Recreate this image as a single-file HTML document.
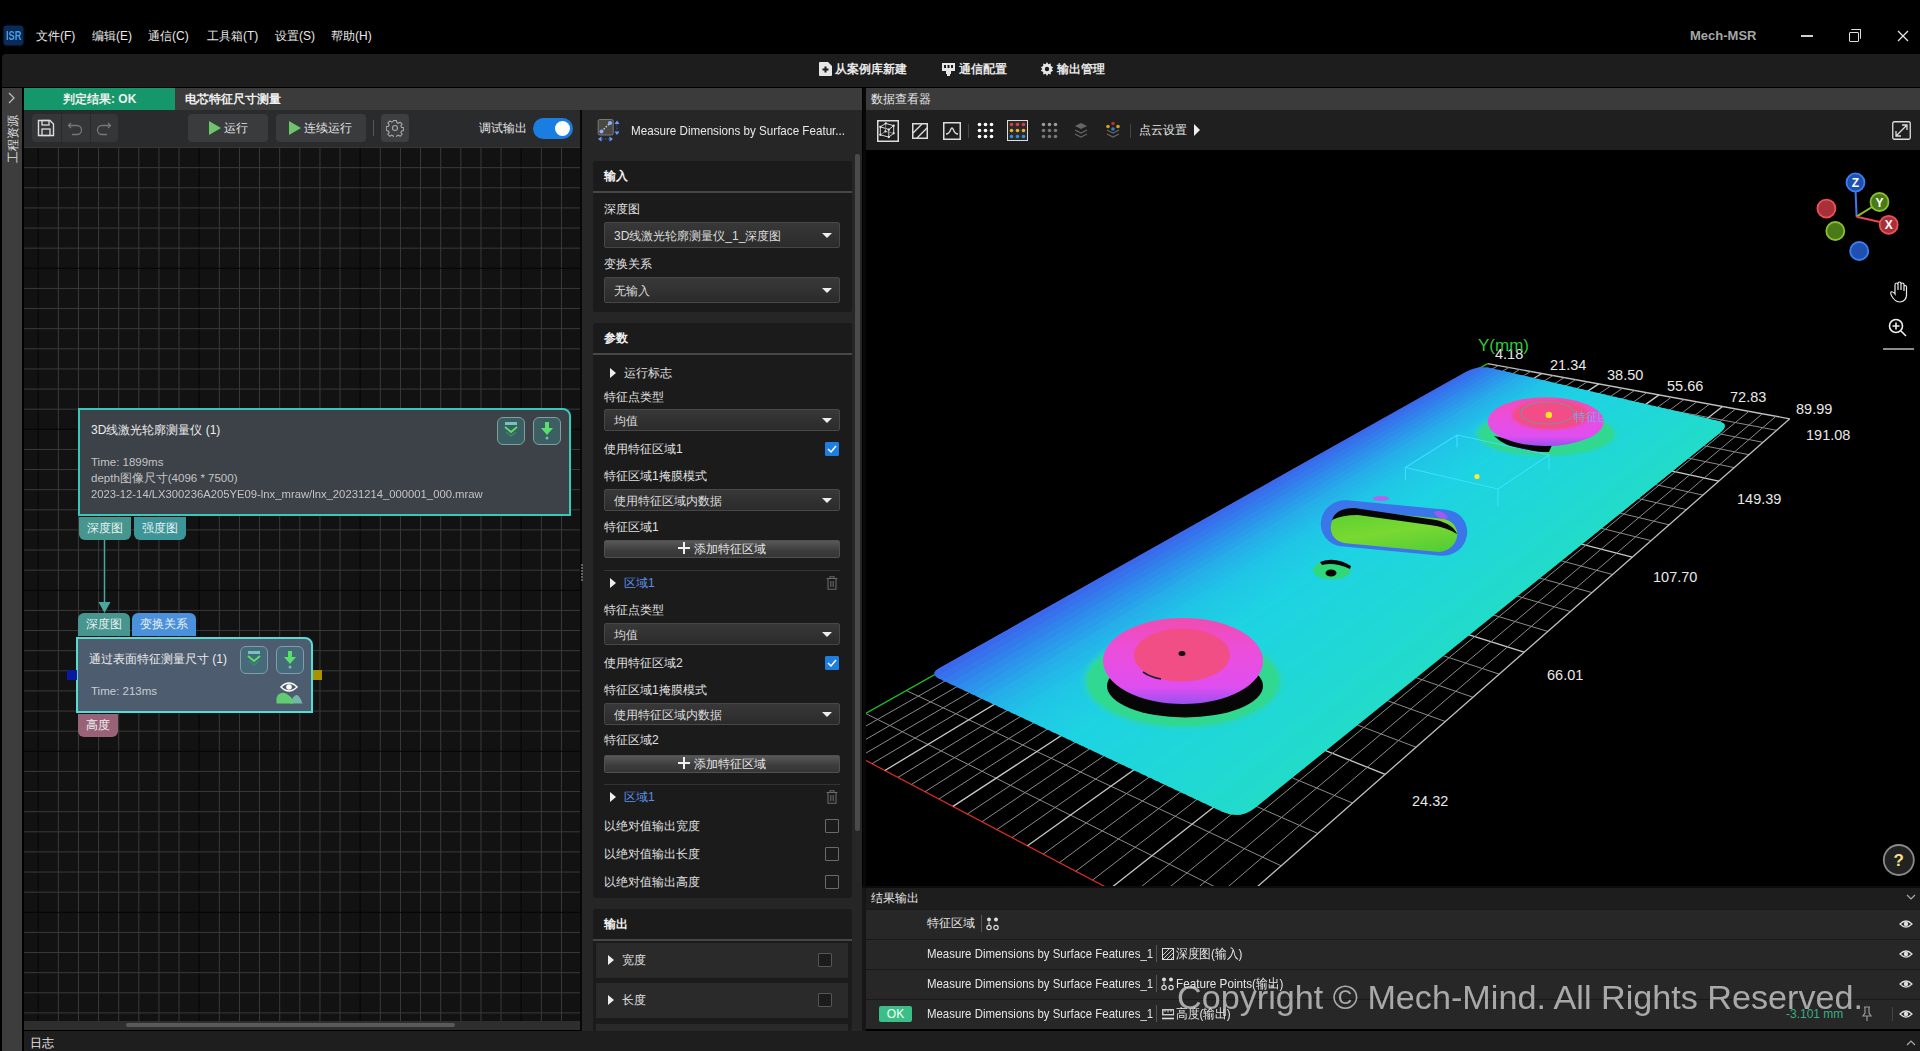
<!DOCTYPE html>
<html><head><meta charset="utf-8">
<style>
*{box-sizing:border-box;margin:0;padding:0}
html,body{width:1920px;height:1051px;overflow:hidden;background:#000;font-family:"Liberation Sans",sans-serif;color:#ddd}
.a{position:absolute}
.t{position:absolute;white-space:nowrap;line-height:1}
.m{font-size:12px;color:#e8e8e8}
.lbl{position:absolute;white-space:nowrap;line-height:1;font-size:12px;color:#e0e0e0;left:604px}
.dd{position:absolute;left:604px;width:236px;height:22px;background:linear-gradient(#383838,#2b2b2b);border:1px solid #474747;border-radius:2px;font-size:12px;color:#dcdcdc;padding:4px 0 0 9px;line-height:1}
.dd:after{content:"";position:absolute;right:7px;top:calc(50% - 2px);border-left:5px solid transparent;border-right:5px solid transparent;border-top:5px solid #eee}
.btn{position:absolute;left:604px;width:236px;height:18px;background:linear-gradient(#585858,#3c3c3c 60%,#363636);border:1px solid #505050;border-radius:2px;font-size:12px;color:#e6e6e6;text-align:center;line-height:16px}
.cb{position:absolute;left:825px;width:14px;height:14px;border:1px solid #6a6a6a;border-radius:1px;background:#1a1a1a}
.cbon{background:#1e7ee0;border-color:#1e7ee0}
.tri{position:absolute;width:0;height:0;border-top:5px solid transparent;border-bottom:5px solid transparent;border-left:6px solid #eee}
.port{position:absolute;height:23px;border-radius:0 0 6px 6px;font-size:12px;color:#e8f0f0;text-align:center;line-height:23px}
.portu{border-radius:6px 6px 0 0}
.rowr{position:absolute;left:866px;width:1054px;height:29px;background:#262626;font-size:13px;color:#e6e6e6}
</style></head><body>

<div class="a" style="left:0;top:0;width:1920px;height:54px;background:#000"></div>
<div class="a" style="left:4px;top:26px;width:19px;height:19px;background:#0a2a5a;border-radius:3px;box-shadow:0 0 2px #1a5aa0"></div>
<div class="t" style="left:6px;top:29px;font-size:13px;font-weight:bold;color:#4a9ee0;transform:scaleX(0.72);transform-origin:0 0">ISR</div>
<div class="t m" style="left:36px;top:30px">文件(F)</div>
<div class="t m" style="left:92px;top:30px">编辑(E)</div>
<div class="t m" style="left:148px;top:30px">通信(C)</div>
<div class="t m" style="left:207px;top:30px">工具箱(T)</div>
<div class="t m" style="left:275px;top:30px">设置(S)</div>
<div class="t m" style="left:331px;top:30px">帮助(H)</div>
<div class="t" style="left:1690px;top:29px;font-size:13px;font-weight:bold;color:#a6a6a6">Mech-MSR</div>
<div class="a" style="left:1801px;top:35px;width:12px;height:2px;background:#d0d0d0"></div>
<div class="a" style="left:1849px;top:32px;width:10px;height:10px;border:1px solid #ddd;border-radius:1px"></div>
<div class="a" style="left:1851px;top:29px;width:10px;height:10px;border-top:1px solid #ddd;border-right:1px solid #ddd;border-radius:1px"></div>
<svg class="a" style="left:1897px;top:30px" width="12" height="12"><path d="M1 1L11 11M11 1L1 11" stroke="#e6e6e6" stroke-width="1.3"/></svg>
<div class="a" style="left:2px;top:54px;width:1918px;height:33px;background:#1d1d1d;border-radius:4px 0 0 0"></div>
<svg class="a" style="left:818px;top:61px" width="15" height="16"><path d="M1 2Q1 1 2 1H10L14 5V14Q14 15 13 15H2Q1 15 1 14Z" fill="#e6e6e6"/><path d="M7.5 5.5V11.5M4.5 8.5H10.5" stroke="#1d1d1d" stroke-width="2"/></svg>
<div class="t m" style="left:835px;top:63px;font-weight:bold">从案例库新建</div>
<svg class="a" style="left:941px;top:62px" width="15" height="16"><path d="M1 1H14V9H10V12H9V14H6V12H5V9H1Z" fill="#e6e6e6"/><rect x="3" y="3" width="2" height="3" fill="#1d1d1d"/><rect x="6.5" y="3" width="2" height="3" fill="#1d1d1d"/><rect x="10" y="3" width="2" height="3" fill="#1d1d1d"/></svg>
<div class="t m" style="left:959px;top:63px;font-weight:bold">通信配置</div>
<svg class="a" style="left:1040px;top:62px" width="14" height="14" viewBox="0 0 14 14"><path d="M7 0L8.3 2.2L10.8 1.5L10.8 4.1L13.2 5.2L11.6 7L13.2 8.8L10.8 9.9L10.8 12.5L8.3 11.8L7 14L5.7 11.8L3.2 12.5L3.2 9.9L0.8 8.8L2.4 7L0.8 5.2L3.2 4.1L3.2 1.5L5.7 2.2Z" fill="#e6e6e6"/><circle cx="7" cy="7" r="2.2" fill="#1d1d1d"/></svg>
<div class="t m" style="left:1057px;top:63px;font-weight:bold">输出管理</div>
<div class="a" style="left:2px;top:88px;width:20px;height:963px;background:#3d3d3d"></div>
<svg class="a" style="left:7px;top:92px" width="10" height="12"><path d="M2 1L7 6L2 11" stroke="#bbb" stroke-width="1.3" fill="none"/></svg>
<div class="t" style="left:-13.5px;top:132.5px;width:52px;font-size:12px;color:#e0e0e0;transform:rotate(-90deg);transform-origin:26px 6px;text-align:center">工程资源</div>
<div class="a" style="left:24px;top:88px;width:838px;height:22px;background:#3b3b3b"></div>
<div class="a" style="left:24px;top:88px;width:151px;height:22px;background:#15976b"></div>
<div class="t" style="left:63px;top:93px;font-size:12px;font-weight:bold;color:#f0f0f0">判定结果: OK</div>
<div class="t" style="left:185px;top:93px;font-size:12px;font-weight:bold;color:#f0f0f0">电芯特征尺寸测量</div>
<div class="a" style="left:866px;top:88px;width:1054px;height:22px;background:#3b3b3b"></div>
<div class="t" style="left:871px;top:93px;font-size:12px;color:#e6e6e6">数据查看器</div>
<div class="a" style="left:24px;top:110px;width:556px;height:37px;background:#2a2b2d"></div>
<div class="a" style="left:32px;top:114px;width:86px;height:28px;background:#353638;border-radius:4px"></div>
<div class="a" style="left:61px;top:114px;width:1px;height:28px;background:#2a2b2d"></div>
<div class="a" style="left:90px;top:114px;width:1px;height:28px;background:#2a2b2d"></div>
<svg class="a" style="left:37px;top:119px" width="18" height="18"><path d="M1.5 1.5H13L16.5 5V16.5H1.5Z" stroke="#ddd" stroke-width="1.4" fill="none"/><rect x="5" y="1.5" width="7" height="4.5" stroke="#ddd" stroke-width="1.3" fill="none"/><rect x="5" y="10" width="8" height="6.5" stroke="#ddd" stroke-width="1.3" fill="none"/></svg>
<svg class="a" style="left:67px;top:120px" width="16" height="16"><path d="M4 3L1.5 5.5L4 8M1.5 5.5H10A4.5 4.5 0 0 1 10 14.5H5" stroke="#777" stroke-width="1.3" fill="none"/></svg>
<svg class="a" style="left:96px;top:120px" width="16" height="16"><path d="M12 3L14.5 5.5L12 8M14.5 5.5H6A4.5 4.5 0 0 0 6 14.5H11" stroke="#777" stroke-width="1.3" fill="none"/></svg>
<div class="a" style="left:188px;top:114px;width:80px;height:28px;background:#3a3b3d;border-radius:4px"></div>
<svg class="a" style="left:209px;top:121px" width="12" height="14"><path d="M0 0L12 7L0 14Z" fill="#6cc46c"/></svg>
<div class="t m" style="left:224px;top:122px;color:#e6e6e6">运行</div>
<div class="a" style="left:276px;top:114px;width:90px;height:28px;background:#3a3b3d;border-radius:4px"></div>
<svg class="a" style="left:289px;top:121px" width="12" height="14"><path d="M0 0L12 7L0 14Z" fill="#6cc46c"/></svg>
<div class="t m" style="left:304px;top:122px;color:#e6e6e6">连续运行</div>
<div class="a" style="left:373px;top:120px;width:1px;height:16px;background:#555"></div>
<div class="a" style="left:381px;top:114px;width:28px;height:28px;background:#3e3f41;border-radius:4px"></div>
<svg class="a" style="left:386px;top:119px" width="18" height="18" viewBox="0 0 18 18"><path d="M7.6 1.5h2.8l.4 2.1 1.5.7 1.8-1.2 2 2-1.2 1.8.7 1.5 2.1.4v2.8l-2.1.4-.7 1.5 1.2 1.8-2 2-1.8-1.2-1.5.7-.4 2.1H7.6l-.4-2.1-1.5-.7-1.8 1.2-2-2 1.2-1.8-.7-1.5-2.1-.4V7.6l2.1-.4.7-1.5-1.2-1.8 2-2 1.8 1.2 1.5-.7z" stroke="#aaa" stroke-width="1.1" fill="none"/><circle cx="9" cy="9" r="2.5" stroke="#aaa" stroke-width="1.1" fill="none"/></svg>
<div class="t m" style="left:479px;top:122px;color:#e6e6e6">调试输出</div>
<div class="a" style="left:533px;top:118px;width:40px;height:21px;background:#1a7de2;border-radius:11px"></div>
<div class="a" style="left:555px;top:121px;width:15px;height:15px;background:#fff;border-radius:50%"></div>
<div class="a" style="left:22px;top:147px;width:2px;height:885px;background:#000"></div>
<svg class="a" style="left:24px;top:147px" width="556" height="874"><rect width="556" height="874" fill="#121212"/><line x1="14.20" y1="0" x2="14.20" y2="874" stroke="#060606" stroke-width="1"/><line x1="34.33" y1="0" x2="34.33" y2="874" stroke="#3a3a3a" stroke-width="1"/><line x1="54.45" y1="0" x2="54.45" y2="874" stroke="#3a3a3a" stroke-width="1"/><line x1="74.58" y1="0" x2="74.58" y2="874" stroke="#3a3a3a" stroke-width="1"/><line x1="94.70" y1="0" x2="94.70" y2="874" stroke="#3a3a3a" stroke-width="1"/><line x1="114.82" y1="0" x2="114.82" y2="874" stroke="#3a3a3a" stroke-width="1"/><line x1="134.95" y1="0" x2="134.95" y2="874" stroke="#3a3a3a" stroke-width="1"/><line x1="155.07" y1="0" x2="155.07" y2="874" stroke="#3a3a3a" stroke-width="1"/><line x1="175.20" y1="0" x2="175.20" y2="874" stroke="#060606" stroke-width="1"/><line x1="195.32" y1="0" x2="195.32" y2="874" stroke="#3a3a3a" stroke-width="1"/><line x1="215.45" y1="0" x2="215.45" y2="874" stroke="#3a3a3a" stroke-width="1"/><line x1="235.57" y1="0" x2="235.57" y2="874" stroke="#3a3a3a" stroke-width="1"/><line x1="255.70" y1="0" x2="255.70" y2="874" stroke="#3a3a3a" stroke-width="1"/><line x1="275.82" y1="0" x2="275.82" y2="874" stroke="#3a3a3a" stroke-width="1"/><line x1="295.95" y1="0" x2="295.95" y2="874" stroke="#3a3a3a" stroke-width="1"/><line x1="316.07" y1="0" x2="316.07" y2="874" stroke="#3a3a3a" stroke-width="1"/><line x1="336.20" y1="0" x2="336.20" y2="874" stroke="#060606" stroke-width="1"/><line x1="356.32" y1="0" x2="356.32" y2="874" stroke="#3a3a3a" stroke-width="1"/><line x1="376.45" y1="0" x2="376.45" y2="874" stroke="#3a3a3a" stroke-width="1"/><line x1="396.57" y1="0" x2="396.57" y2="874" stroke="#3a3a3a" stroke-width="1"/><line x1="416.70" y1="0" x2="416.70" y2="874" stroke="#3a3a3a" stroke-width="1"/><line x1="436.82" y1="0" x2="436.82" y2="874" stroke="#3a3a3a" stroke-width="1"/><line x1="456.95" y1="0" x2="456.95" y2="874" stroke="#3a3a3a" stroke-width="1"/><line x1="477.07" y1="0" x2="477.07" y2="874" stroke="#3a3a3a" stroke-width="1"/><line x1="497.20" y1="0" x2="497.20" y2="874" stroke="#060606" stroke-width="1"/><line x1="517.33" y1="0" x2="517.33" y2="874" stroke="#3a3a3a" stroke-width="1"/><line x1="537.45" y1="0" x2="537.45" y2="874" stroke="#3a3a3a" stroke-width="1"/><line x1="0" y1="0.55" x2="556" y2="0.55" stroke="#3a3a3a" stroke-width="1"/><line x1="0" y1="20.68" x2="556" y2="20.68" stroke="#3a3a3a" stroke-width="1"/><line x1="0" y1="40.80" x2="556" y2="40.80" stroke="#3a3a3a" stroke-width="1"/><line x1="0" y1="60.93" x2="556" y2="60.93" stroke="#3a3a3a" stroke-width="1"/><line x1="0" y1="81.05" x2="556" y2="81.05" stroke="#3a3a3a" stroke-width="1"/><line x1="0" y1="101.18" x2="556" y2="101.18" stroke="#3a3a3a" stroke-width="1"/><line x1="0" y1="121.30" x2="556" y2="121.30" stroke="#060606" stroke-width="1"/><line x1="0" y1="141.43" x2="556" y2="141.43" stroke="#3a3a3a" stroke-width="1"/><line x1="0" y1="161.55" x2="556" y2="161.55" stroke="#3a3a3a" stroke-width="1"/><line x1="0" y1="181.68" x2="556" y2="181.68" stroke="#3a3a3a" stroke-width="1"/><line x1="0" y1="201.80" x2="556" y2="201.80" stroke="#3a3a3a" stroke-width="1"/><line x1="0" y1="221.93" x2="556" y2="221.93" stroke="#3a3a3a" stroke-width="1"/><line x1="0" y1="242.05" x2="556" y2="242.05" stroke="#3a3a3a" stroke-width="1"/><line x1="0" y1="262.18" x2="556" y2="262.18" stroke="#3a3a3a" stroke-width="1"/><line x1="0" y1="282.30" x2="556" y2="282.30" stroke="#060606" stroke-width="1"/><line x1="0" y1="302.43" x2="556" y2="302.43" stroke="#3a3a3a" stroke-width="1"/><line x1="0" y1="322.55" x2="556" y2="322.55" stroke="#3a3a3a" stroke-width="1"/><line x1="0" y1="342.68" x2="556" y2="342.68" stroke="#3a3a3a" stroke-width="1"/><line x1="0" y1="362.80" x2="556" y2="362.80" stroke="#3a3a3a" stroke-width="1"/><line x1="0" y1="382.92" x2="556" y2="382.92" stroke="#3a3a3a" stroke-width="1"/><line x1="0" y1="403.05" x2="556" y2="403.05" stroke="#3a3a3a" stroke-width="1"/><line x1="0" y1="423.17" x2="556" y2="423.17" stroke="#3a3a3a" stroke-width="1"/><line x1="0" y1="443.30" x2="556" y2="443.30" stroke="#060606" stroke-width="1"/><line x1="0" y1="463.42" x2="556" y2="463.42" stroke="#3a3a3a" stroke-width="1"/><line x1="0" y1="483.55" x2="556" y2="483.55" stroke="#3a3a3a" stroke-width="1"/><line x1="0" y1="503.67" x2="556" y2="503.67" stroke="#3a3a3a" stroke-width="1"/><line x1="0" y1="523.80" x2="556" y2="523.80" stroke="#3a3a3a" stroke-width="1"/><line x1="0" y1="543.92" x2="556" y2="543.92" stroke="#3a3a3a" stroke-width="1"/><line x1="0" y1="564.05" x2="556" y2="564.05" stroke="#3a3a3a" stroke-width="1"/><line x1="0" y1="584.17" x2="556" y2="584.17" stroke="#3a3a3a" stroke-width="1"/><line x1="0" y1="604.30" x2="556" y2="604.30" stroke="#060606" stroke-width="1"/><line x1="0" y1="624.42" x2="556" y2="624.42" stroke="#3a3a3a" stroke-width="1"/><line x1="0" y1="644.55" x2="556" y2="644.55" stroke="#3a3a3a" stroke-width="1"/><line x1="0" y1="664.67" x2="556" y2="664.67" stroke="#3a3a3a" stroke-width="1"/><line x1="0" y1="684.80" x2="556" y2="684.80" stroke="#3a3a3a" stroke-width="1"/><line x1="0" y1="704.92" x2="556" y2="704.92" stroke="#3a3a3a" stroke-width="1"/><line x1="0" y1="725.05" x2="556" y2="725.05" stroke="#3a3a3a" stroke-width="1"/><line x1="0" y1="745.17" x2="556" y2="745.17" stroke="#3a3a3a" stroke-width="1"/><line x1="0" y1="765.30" x2="556" y2="765.30" stroke="#060606" stroke-width="1"/><line x1="0" y1="785.42" x2="556" y2="785.42" stroke="#3a3a3a" stroke-width="1"/><line x1="0" y1="805.55" x2="556" y2="805.55" stroke="#3a3a3a" stroke-width="1"/><line x1="0" y1="825.67" x2="556" y2="825.67" stroke="#3a3a3a" stroke-width="1"/><line x1="0" y1="845.80" x2="556" y2="845.80" stroke="#3a3a3a" stroke-width="1"/><line x1="0" y1="865.92" x2="556" y2="865.92" stroke="#3a3a3a" stroke-width="1"/></svg>
<div class="a" style="left:24px;top:1021px;width:556px;height:9px;background:#2e2e2e"></div>
<div class="a" style="left:126px;top:1023px;width:329px;height:4px;background:#5a5a5a;border-radius:2px"></div>
<div class="a" style="left:78px;top:408px;width:493px;height:108px;background:#3d4148;border:2px solid #38c9bd;border-radius:0 8px 0 0"></div>
<div class="t" style="left:91px;top:424px;font-size:12px;color:#ececec">3D线激光轮廓测量仪 (1)</div>
<div class="t" style="left:91px;top:457px;font-size:11.5px;color:#c4c4c4">Time: 1899ms</div>
<div class="t" style="left:91px;top:473px;font-size:11.5px;color:#c4c4c4">depth图像尺寸(4096 * 7500)</div>
<div class="t" style="left:91px;top:489px;font-size:11.5px;color:#c4c4c4;transform:scaleX(0.98);transform-origin:0 0">2023-12-14/LX300236A205YE09-lnx_mraw/lnx_20231214_000001_000.mraw</div>
<div class="a" style="left:497px;top:417px;width:28px;height:28px;background:#3b5f63;border:1.5px solid #7fa0a0;border-radius:6px"></div><svg class="a" style="left:503px;top:422px" width="16" height="18"><rect x="2" y="0" width="12" height="3" fill="#72c4bc"/><path d="M2 5L8 10L14 5" stroke="#5ae06a" stroke-width="1.8" fill="none"/><path d="M3 10L8 14L13 10" stroke="#3a8a6a" stroke-width="1.4" fill="none"/></svg><div class="a" style="left:533px;top:417px;width:28px;height:28px;background:#3b5f63;border:1.5px solid #7fa0a0;border-radius:6px"></div><svg class="a" style="left:540px;top:421px" width="14" height="20"><rect x="5" y="1" width="4" height="7" fill="#5ae06a"/><path d="M1 7H13L7 14Z" fill="#5ae06a"/><circle cx="7" cy="17" r="1.5" fill="#80b8b0"/></svg>
<div class="port" style="left:79px;top:517px;width:52px;background:#46968f">深度图</div>
<div class="port" style="left:134px;top:517px;width:52px;background:#3c9598">强度图</div>
<svg class="a" style="left:95px;top:540px" width="20" height="75"><line x1="9.5" y1="0" x2="9.5" y2="64" stroke="#4aa69e" stroke-width="1.5"/><path d="M3.5 62L15.5 62L9.5 73Z" fill="#4aa69e"/></svg>
<div class="port portu" style="left:78px;top:613px;width:52px;background:#46968f">深度图</div>
<div class="port portu" style="left:132px;top:613px;width:64px;background:#4a90dc">变换关系</div>
<div class="a" style="left:76px;top:637px;width:237px;height:76px;background:#4d5c6e;border:2px solid #55ddd4;border-radius:0 8px 0 0"></div>
<div class="t" style="left:89px;top:653px;font-size:12px;color:#ececec">通过表面特征测量尺寸 (1)</div>
<div class="t" style="left:91px;top:686px;font-size:11.5px;color:#c8cdd4">Time: 213ms</div>
<div class="a" style="left:240px;top:646px;width:28px;height:28px;background:#466a7a;border:1.5px solid #7d9cac;border-radius:6px"></div><svg class="a" style="left:246px;top:651px" width="16" height="18"><rect x="2" y="0" width="12" height="3" fill="#72c4bc"/><path d="M2 5L8 10L14 5" stroke="#5ae06a" stroke-width="1.8" fill="none"/><path d="M3 10L8 14L13 10" stroke="#3a8a6a" stroke-width="1.4" fill="none"/></svg><div class="a" style="left:276px;top:646px;width:28px;height:28px;background:#466a7a;border:1.5px solid #7d9cac;border-radius:6px"></div><svg class="a" style="left:283px;top:650px" width="14" height="20"><rect x="5" y="1" width="4" height="7" fill="#5ae06a"/><path d="M1 7H13L7 14Z" fill="#5ae06a"/><circle cx="7" cy="17" r="1.5" fill="#80b8b0"/></svg>
<svg class="a" style="left:275px;top:680px" width="28" height="26"><path d="M6 7Q14 -1 22 7Q14 15 6 7Z" stroke="#fff" stroke-width="1.5" fill="none"/><circle cx="14" cy="7" r="2.8" fill="#fff"/><path d="M15 23.6Q18 15 22 15Q25 16 27.5 23.6Z" fill="#72b8a6"/><path d="M1.5 23.6V18Q3 13 8 12.8Q13 13 18 20V23.6Z" fill="#62cc74"/></svg>
<div class="a" style="left:67px;top:670px;width:10px;height:10px;background:#0a1aa0"></div>
<div class="a" style="left:313px;top:670px;width:9px;height:10px;background:#a89200"></div>
<div class="port" style="left:78px;top:714px;width:40px;background:#9a6276">高度</div>
<div class="a" style="left:580px;top:110px;width:2px;height:921px;background:#080808"></div>
<div class="a" style="left:582px;top:110px;width:280px;height:921px;background:#262626"></div>
<div class="a" style="left:581px;top:564px;width:2px;height:2px;background:#7a7a7a;border-radius:1px"></div><div class="a" style="left:581px;top:567px;width:2px;height:2px;background:#7a7a7a;border-radius:1px"></div><div class="a" style="left:581px;top:570px;width:2px;height:2px;background:#7a7a7a;border-radius:1px"></div><div class="a" style="left:581px;top:573px;width:2px;height:2px;background:#7a7a7a;border-radius:1px"></div><div class="a" style="left:581px;top:576px;width:2px;height:2px;background:#7a7a7a;border-radius:1px"></div><div class="a" style="left:581px;top:579px;width:2px;height:2px;background:#7a7a7a;border-radius:1px"></div>
<div class="a" style="left:863px;top:88px;width:3px;height:800px;background:#080808"></div>
<svg class="a" style="left:597px;top:119px" width="24" height="24"><rect x="1.2" y="0.5" width="15" height="15.5" rx="1.5" fill="#4a4844" stroke="#7c7a74" stroke-width="1"/><line x1="4.5" y1="12.5" x2="13" y2="4" stroke="#ccc" stroke-width="1.4" stroke-dasharray="1.6 1.4"/><circle cx="4.5" cy="12.5" r="2" fill="#8ab0ff"/><circle cx="13" cy="4" r="2" fill="#8ab0ff"/><path d="M20 1.5L22.5 5H17.5Z M20 16L22.5 12.5H17.5Z" fill="#6a9cff"/><line x1="20" y1="5.5" x2="20" y2="12.5" stroke="#2a4a90" stroke-width="1.5" stroke-dasharray="1.5 1.5"/><path d="M1 20L4.5 17.5V22.5Z M16 20L12.5 17.5V22.5Z" fill="#6a9cff"/><line x1="5" y1="20" x2="12" y2="20" stroke="#2a4a90" stroke-width="1.5" stroke-dasharray="1.5 1.5"/></svg>
<div class="t" style="left:631px;top:124px;font-size:13px;color:#e8e8e8;transform:scaleX(0.895);transform-origin:0 0">Measure Dimensions by Surface Featur...</div>
<div class="a" style="left:855px;top:154px;width:5px;height:677px;background:#4a4a4a;border-radius:2px"></div>
<div class="a" style="left:593px;top:161px;width:259px;height:151px;background:#1b1b1b;border-radius:3px"></div><div class="a" style="left:593px;top:191px;width:259px;height:2px;background:#474747"></div><div class="t" style="left:604px;top:170px;font-size:12px;font-weight:bold;color:#f0f0f0">输入</div>
<div class="a" style="left:593px;top:323px;width:259px;height:575px;background:#1b1b1b;border-radius:3px"></div><div class="a" style="left:593px;top:353px;width:259px;height:2px;background:#474747"></div><div class="t" style="left:604px;top:332px;font-size:12px;font-weight:bold;color:#f0f0f0">参数</div>
<div class="a" style="left:593px;top:909px;width:259px;height:122px;background:#1b1b1b;border-radius:3px"></div><div class="a" style="left:593px;top:939px;width:259px;height:2px;background:#474747"></div><div class="t" style="left:604px;top:918px;font-size:12px;font-weight:bold;color:#f0f0f0">输出</div>
<div class="lbl" style="left:604px;top:203px;color:#e0e0e0">深度图</div>
<div class="dd" style="top:222px;height:26px;padding-top:7px">3D线激光轮廓测量仪_1_深度图</div>
<div class="lbl" style="left:604px;top:258px;color:#e0e0e0">变换关系</div>
<div class="dd" style="top:277px;height:26px;padding-top:7px">无输入</div>
<div class="tri" style="left:610px;top:368px"></div>
<div class="lbl" style="left:624px;top:367px;color:#e0e0e0">运行标志</div>
<div class="lbl" style="left:604px;top:391px;color:#e0e0e0">特征点类型</div>
<div class="dd" style="top:409px;height:22px;padding-top:5px">均值</div>
<div class="lbl" style="left:604px;top:443px;color:#e0e0e0">使用特征区域1</div>
<div class="cb cbon" style="top:442px"></div><svg class="a" style="left:827px;top:444px" width="10" height="10"><path d="M1 5L4 8L9 2" stroke="#fff" stroke-width="1.5" fill="none"/></svg>
<div class="lbl" style="left:604px;top:470px;color:#e0e0e0">特征区域1掩膜模式</div>
<div class="dd" style="top:489px;height:22px;padding-top:5px">使用特征区域内数据</div>
<div class="lbl" style="left:604px;top:521px;color:#e0e0e0">特征区域1</div>
<div class="btn" style="top:540px"><svg style="position:relative;top:1px;margin-right:4px" width="12" height="12"><path d="M6 0V12M0 6H12" stroke="#f0f0f0" stroke-width="2"/></svg>添加特征区域</div>
<div class="a" style="left:604px;top:570px;width:236px;height:1px;background:#333"></div>
<div class="tri" style="left:610px;top:578px"></div>
<div class="lbl" style="left:624px;top:577px;color:#5b8fe6">区域1</div>
<svg class="a" style="left:826px;top:576px" width="12" height="14"><path d="M0.5 2.5H11.5M4 2.5V0.8H8V2.5M2 3V13.2H10V3M4.8 5V11M7.2 5V11" stroke="#6a6a6a" stroke-width="1.1" fill="none"/></svg>
<div class="lbl" style="left:604px;top:604px;color:#e0e0e0">特征点类型</div>
<div class="dd" style="top:623px;height:22px;padding-top:5px">均值</div>
<div class="lbl" style="left:604px;top:657px;color:#e0e0e0">使用特征区域2</div>
<div class="cb cbon" style="top:656px"></div><svg class="a" style="left:827px;top:658px" width="10" height="10"><path d="M1 5L4 8L9 2" stroke="#fff" stroke-width="1.5" fill="none"/></svg>
<div class="lbl" style="left:604px;top:684px;color:#e0e0e0">特征区域1掩膜模式</div>
<div class="dd" style="top:703px;height:22px;padding-top:5px">使用特征区域内数据</div>
<div class="lbl" style="left:604px;top:734px;color:#e0e0e0">特征区域2</div>
<div class="btn" style="top:755px"><svg style="position:relative;top:1px;margin-right:4px" width="12" height="12"><path d="M6 0V12M0 6H12" stroke="#f0f0f0" stroke-width="2"/></svg>添加特征区域</div>
<div class="a" style="left:604px;top:784px;width:236px;height:1px;background:#333"></div>
<div class="tri" style="left:610px;top:792px"></div>
<div class="lbl" style="left:624px;top:791px;color:#5b8fe6">区域1</div>
<svg class="a" style="left:826px;top:790px" width="12" height="14"><path d="M0.5 2.5H11.5M4 2.5V0.8H8V2.5M2 3V13.2H10V3M4.8 5V11M7.2 5V11" stroke="#6a6a6a" stroke-width="1.1" fill="none"/></svg>
<div class="lbl" style="left:604px;top:820px;color:#e0e0e0">以绝对值输出宽度</div>
<div class="cb" style="top:819px;background:transparent"></div>
<div class="lbl" style="left:604px;top:848px;color:#e0e0e0">以绝对值输出长度</div>
<div class="cb" style="top:847px;background:transparent"></div>
<div class="lbl" style="left:604px;top:876px;color:#e0e0e0">以绝对值输出高度</div>
<div class="cb" style="top:875px;background:transparent"></div>
<div class="a" style="left:596px;top:943px;width:252px;height:35px;background:#2a2a2a"></div>
<div class="tri" style="left:608px;top:955px"></div>
<div class="lbl" style="left:622px;top:954px;color:#e0e0e0">宽度</div>
<div class="cb" style="left:818px;top:953px;background:#1c1c1c;border-color:#555"></div>
<div class="a" style="left:596px;top:983px;width:252px;height:35px;background:#2a2a2a"></div>
<div class="tri" style="left:608px;top:995px"></div>
<div class="lbl" style="left:622px;top:994px;color:#e0e0e0">长度</div>
<div class="cb" style="left:818px;top:993px;background:#1c1c1c;border-color:#555"></div>
<div class="a" style="left:596px;top:1024px;width:252px;height:35px;background:#2a2a2a"></div>
<div class="a" style="left:866px;top:110px;width:1054px;height:40px;background:#1f1f1f"></div>
<svg class="a" style="left:877px;top:120px" width="22" height="22"><rect x="0.75" y="0.75" width="20.5" height="20.5" stroke="#ddd" stroke-width="1.5" fill="none"/><path d="M8.75 3.4L16.7 5.7V13.3L11.8 17.1L3.3 14.8V6.8Z M11.8 9.5L3.3 6.8 M11.8 9.5L16.7 5.7 M11.8 9.5V17.1" stroke="#d8d8d8" stroke-width="1" fill="none"/><path d="M8.4 11.4L8.75 3.4M8.4 11.4L3.3 14.8M8.4 11.4L16.7 13.3" stroke="#999" stroke-width="0.8" fill="none"/><g fill="#eee"><circle cx="8.75" cy="3.4" r="1.1"/><circle cx="16.7" cy="5.7" r="1.1"/><circle cx="16.7" cy="13.3" r="1.1"/><circle cx="11.8" cy="17.1" r="1.1"/><circle cx="3.3" cy="14.8" r="1.1"/><circle cx="3.3" cy="6.8" r="1.1"/><circle cx="11.8" cy="9.5" r="1.1"/><circle cx="8.4" cy="11.4" r="1.1"/></g></svg><svg class="a" style="left:912px;top:123px" width="16" height="16"><rect x="0.75" y="0.75" width="14.5" height="14.5" stroke="#ddd" stroke-width="1.5" fill="none"/><path d="M1 10L10 1M5 15L15 5" stroke="#ddd" stroke-width="1.4"/></svg><svg class="a" style="left:943px;top:122px" width="18" height="18"><rect x="0.75" y="0.75" width="16.5" height="16.5" stroke="#ddd" stroke-width="1.5" fill="none"/><path d="M3 12Q6 12 7.5 8Q9 4 10.5 8Q12 12 15 12" stroke="#ddd" stroke-width="1.3" fill="none"/></svg><div class="a" style="left:968px;top:124px;width:1px;height:14px;background:#444"></div><svg class="a" style="left:977px;top:122px" width="18" height="18"><circle cx="2.5" cy="2.5" r="1.8" fill="#fff"/><circle cx="8.5" cy="2.5" r="1.8" fill="#fff"/><circle cx="14.5" cy="2.5" r="1.8" fill="#fff"/><circle cx="2.5" cy="8.5" r="1.8" fill="#fff"/><circle cx="8.5" cy="8.5" r="1.8" fill="#fff"/><circle cx="14.5" cy="8.5" r="1.8" fill="#fff"/><circle cx="2.5" cy="14.5" r="1.8" fill="#fff"/><circle cx="8.5" cy="14.5" r="1.8" fill="#fff"/><circle cx="14.5" cy="14.5" r="1.8" fill="#fff"/></svg><div class="a" style="left:1007px;top:120px;width:21px;height:21px;border:1.5px solid #ddd;background:#2a2a2a"></div><svg class="a" style="left:1009px;top:122px" width="18" height="18"><circle cx="2.5" cy="2.5" r="1.8" fill="#d84040"/><circle cx="8.5" cy="2.5" r="1.8" fill="#d84040"/><circle cx="14.5" cy="2.5" r="1.8" fill="#d84040"/><circle cx="2.5" cy="8.5" r="1.8" fill="#e8b030"/><circle cx="8.5" cy="8.5" r="1.8" fill="#e8b030"/><circle cx="14.5" cy="8.5" r="1.8" fill="#e8b030"/><circle cx="2.5" cy="14.5" r="1.8" fill="#3090e0"/><circle cx="8.5" cy="14.5" r="1.8" fill="#3090e0"/><circle cx="14.5" cy="14.5" r="1.8" fill="#3090e0"/></svg><svg class="a" style="left:1041px;top:122px" width="18" height="18"><circle cx="2.5" cy="2.5" r="1.8" fill="#999"/><circle cx="8.5" cy="2.5" r="1.8" fill="#999"/><circle cx="14.5" cy="2.5" r="1.8" fill="#999"/><circle cx="2.5" cy="8.5" r="1.8" fill="#777"/><circle cx="8.5" cy="8.5" r="1.8" fill="#777"/><circle cx="14.5" cy="8.5" r="1.8" fill="#777"/><circle cx="2.5" cy="14.5" r="1.8" fill="#777"/><circle cx="8.5" cy="14.5" r="1.8" fill="#777"/><circle cx="14.5" cy="14.5" r="1.8" fill="#777"/></svg><svg class="a" style="left:1073px;top:121px" width="16" height="18"><path d="M8 2L14 5L8 8L2 5Z" fill="#666"/><path d="M2 9L8 12L14 9M2 13L8 16L14 13" stroke="#666" stroke-width="1.2" fill="none"/></svg><svg class="a" style="left:1105px;top:121px" width="16" height="18"><circle cx="8" cy="2.5" r="1.8" fill="#c03030"/><circle cx="3" cy="5.5" r="1.8" fill="#d0a020"/><circle cx="13" cy="5.5" r="1.8" fill="#d0a020"/><circle cx="8" cy="8" r="1.8" fill="#2a80d0"/><path d="M2 9L8 12L14 9M2 13L8 16L14 13" stroke="#666" stroke-width="1.2" fill="none"/></svg><div class="a" style="left:1130px;top:124px;width:1px;height:14px;background:#444"></div><div class="t m" style="left:1139px;top:124px;color:#e6e6e6">点云设置</div><svg class="a" style="left:1194px;top:124px" width="7" height="12"><path d="M0 0L6 6L0 12Z" fill="#eee"/></svg><svg class="a" style="left:1892px;top:121px" width="19" height="19"><rect x="0.75" y="0.75" width="17.5" height="17.5" rx="1.5" stroke="#ddd" stroke-width="1.3" fill="none"/><path d="M4 15L15 4M10 4H15V9M4 10V15H9" stroke="#ddd" stroke-width="1.3" fill="none"/></svg>
<svg class="a" style="left:866px;top:150px" width="1054" height="736" viewBox="866 150 1054 736"><rect x="866" y="150" width="1054" height="736" fill="#000"/><defs>
<linearGradient id="pg" gradientUnits="userSpaceOnUse" x1="1205" y1="523" x2="1352" y2="735">
<stop offset="0" stop-color="#3f5ff0"/><stop offset="0.12" stop-color="#3474ec"/><stop offset="0.35" stop-color="#22b4ea"/><stop offset="0.55" stop-color="#1ed0e2"/><stop offset="1" stop-color="#22dccb"/>
</linearGradient>
<linearGradient id="pg2" gradientUnits="userSpaceOnUse" x1="1476" y1="370" x2="1240" y2="818">
<stop offset="0" stop-color="#5a40ff" stop-opacity="0.25"/><stop offset="0.5" stop-color="#000" stop-opacity="0"/><stop offset="1" stop-color="#20e090" stop-opacity="0.25"/>
</linearGradient>
<radialGradient id="gring" cx="0.5" cy="0.5" r="0.5"><stop offset="0.75" stop-color="#2fd88a"/><stop offset="0.9" stop-color="#2ad6a8"/><stop offset="1" stop-color="#22d0d8" stop-opacity="0"/></radialGradient>
<radialGradient id="mag" cx="0.5" cy="0.45" r="0.55"><stop offset="0.55" stop-color="#f04c9a"/><stop offset="0.75" stop-color="#ec50d8"/><stop offset="1" stop-color="#d84cf0"/></radialGradient>
<clipPath id="vclip"><rect x="866" y="150" width="1054" height="736"/></clipPath>
</defs><g clip-path="url(#vclip)"><line x1="822.5" y1="737.6" x2="1200.2" y2="936.9" stroke="#d02a20" stroke-width="1.3"/><line x1="865.4" y1="713.4" x2="1242.0" y2="900.2" stroke="#8a8a8a" stroke-width="1"/><line x1="906.2" y1="690.5" x2="1281.1" y2="865.8" stroke="#8a8a8a" stroke-width="1"/><line x1="945.0" y1="668.7" x2="1317.9" y2="833.5" stroke="#8a8a8a" stroke-width="1"/><line x1="982.0" y1="647.9" x2="1352.5" y2="803.0" stroke="#8a8a8a" stroke-width="1"/><line x1="1017.3" y1="628.1" x2="1385.2" y2="774.3" stroke="#c8c8c8" stroke-width="1.3"/><line x1="1050.9" y1="609.1" x2="1416.1" y2="747.2" stroke="#8a8a8a" stroke-width="1"/><line x1="1083.1" y1="591.1" x2="1445.3" y2="721.5" stroke="#8a8a8a" stroke-width="1"/><line x1="1113.8" y1="573.8" x2="1472.9" y2="697.2" stroke="#8a8a8a" stroke-width="1"/><line x1="1143.3" y1="557.2" x2="1499.2" y2="674.1" stroke="#8a8a8a" stroke-width="1"/><line x1="1171.5" y1="541.3" x2="1524.1" y2="652.2" stroke="#c8c8c8" stroke-width="1.3"/><line x1="1198.6" y1="526.1" x2="1547.8" y2="631.4" stroke="#8a8a8a" stroke-width="1"/><line x1="1224.6" y1="511.5" x2="1570.5" y2="611.5" stroke="#8a8a8a" stroke-width="1"/><line x1="1249.6" y1="497.4" x2="1592.0" y2="592.6" stroke="#8a8a8a" stroke-width="1"/><line x1="1273.6" y1="483.9" x2="1612.6" y2="574.5" stroke="#8a8a8a" stroke-width="1"/><line x1="1296.7" y1="470.9" x2="1632.3" y2="557.2" stroke="#c8c8c8" stroke-width="1.3"/><line x1="1319.0" y1="458.4" x2="1651.1" y2="540.6" stroke="#8a8a8a" stroke-width="1"/><line x1="1340.4" y1="446.4" x2="1669.1" y2="524.8" stroke="#8a8a8a" stroke-width="1"/><line x1="1361.1" y1="434.7" x2="1686.4" y2="509.6" stroke="#8a8a8a" stroke-width="1"/><line x1="1381.1" y1="423.5" x2="1702.9" y2="495.1" stroke="#8a8a8a" stroke-width="1"/><line x1="1400.4" y1="412.7" x2="1718.8" y2="481.1" stroke="#c8c8c8" stroke-width="1.3"/><line x1="1419.0" y1="402.2" x2="1734.1" y2="467.6" stroke="#8a8a8a" stroke-width="1"/><line x1="1437.0" y1="392.1" x2="1748.8" y2="454.7" stroke="#8a8a8a" stroke-width="1"/><line x1="1454.4" y1="382.3" x2="1763.0" y2="442.3" stroke="#8a8a8a" stroke-width="1"/><line x1="1471.2" y1="372.8" x2="1776.6" y2="430.3" stroke="#8a8a8a" stroke-width="1"/><line x1="1487.6" y1="363.6" x2="1789.7" y2="418.8" stroke="#c0c0c0" stroke-width="1.3"/><line x1="822.5" y1="737.6" x2="1487.6" y2="363.6" stroke="#22c02a" stroke-width="1.3"/><line x1="834.6" y1="743.9" x2="1498.2" y2="365.6" stroke="#8a8a8a" stroke-width="1"/><line x1="846.8" y1="750.4" x2="1508.9" y2="367.5" stroke="#8a8a8a" stroke-width="1"/><line x1="859.3" y1="757.0" x2="1519.7" y2="369.5" stroke="#8a8a8a" stroke-width="1"/><line x1="872.0" y1="763.7" x2="1530.7" y2="371.5" stroke="#8a8a8a" stroke-width="1"/><line x1="884.9" y1="770.5" x2="1541.8" y2="373.5" stroke="#c8c8c8" stroke-width="1.3"/><line x1="898.0" y1="777.4" x2="1552.9" y2="375.6" stroke="#8a8a8a" stroke-width="1"/><line x1="911.4" y1="784.5" x2="1564.2" y2="377.6" stroke="#8a8a8a" stroke-width="1"/><line x1="925.0" y1="791.7" x2="1575.6" y2="379.7" stroke="#8a8a8a" stroke-width="1"/><line x1="938.9" y1="799.0" x2="1587.2" y2="381.8" stroke="#8a8a8a" stroke-width="1"/><line x1="953.0" y1="806.4" x2="1598.8" y2="383.9" stroke="#c8c8c8" stroke-width="1.3"/><line x1="967.4" y1="814.0" x2="1610.6" y2="386.1" stroke="#8a8a8a" stroke-width="1"/><line x1="982.0" y1="821.7" x2="1622.5" y2="388.3" stroke="#8a8a8a" stroke-width="1"/><line x1="996.9" y1="829.6" x2="1634.5" y2="390.5" stroke="#8a8a8a" stroke-width="1"/><line x1="1012.1" y1="837.6" x2="1646.7" y2="392.7" stroke="#8a8a8a" stroke-width="1"/><line x1="1027.5" y1="845.8" x2="1659.0" y2="394.9" stroke="#c8c8c8" stroke-width="1.3"/><line x1="1043.3" y1="854.1" x2="1671.4" y2="397.2" stroke="#8a8a8a" stroke-width="1"/><line x1="1059.4" y1="862.6" x2="1684.0" y2="399.5" stroke="#8a8a8a" stroke-width="1"/><line x1="1075.8" y1="871.2" x2="1696.7" y2="401.8" stroke="#8a8a8a" stroke-width="1"/><line x1="1092.5" y1="880.1" x2="1709.5" y2="404.1" stroke="#8a8a8a" stroke-width="1"/><line x1="1109.6" y1="889.1" x2="1722.5" y2="406.5" stroke="#c8c8c8" stroke-width="1.3"/><line x1="1127.0" y1="898.2" x2="1735.7" y2="408.9" stroke="#8a8a8a" stroke-width="1"/><line x1="1144.7" y1="907.6" x2="1749.0" y2="411.3" stroke="#8a8a8a" stroke-width="1"/><line x1="1162.8" y1="917.2" x2="1762.4" y2="413.8" stroke="#8a8a8a" stroke-width="1"/><line x1="1181.3" y1="926.9" x2="1776.0" y2="416.3" stroke="#8a8a8a" stroke-width="1"/><line x1="1200.2" y1="936.9" x2="1789.7" y2="418.8" stroke="#c0c0c0" stroke-width="1.3"/><clipPath id="plclip"><path d="M939.9 679.1Q929.0 674.0 939.5 668.1L1465.8 371.9Q1478.0 365.0 1491.6 368.2L1717.4 420.8Q1731.0 424.0 1720.1 432.8L1255.6 807.4Q1240.0 820.0 1221.9 811.5Z"/></clipPath><g clip-path="url(#plclip)"><path d="M918.0 673.0L1484.0 355.0L1492.5 357.2L928.7 678.2Z" fill="#3e60eb"/><path d="M924.7 676.3L1489.3 356.4L1497.9 358.6L935.4 681.5Z" fill="#3a69ec"/><path d="M931.4 679.5L1494.7 357.8L1503.2 359.9L942.1 684.8Z" fill="#3771ec"/><path d="M938.1 682.8L1500.0 359.1L1508.5 361.3L948.9 688.0Z" fill="#347aec"/><path d="M944.8 686.1L1505.3 360.5L1513.9 362.7L955.6 691.3Z" fill="#3183ec"/><path d="M951.5 689.4L1510.7 361.9L1519.2 364.1L962.3 694.6Z" fill="#2f8cec"/><path d="M958.2 692.6L1516.0 363.2L1524.5 365.4L969.0 697.9Z" fill="#2c94eb"/><path d="M965.0 695.9L1521.3 364.6L1529.9 366.8L975.7 701.1Z" fill="#2a9ceb"/><path d="M971.7 699.2L1526.7 366.0L1535.2 368.2L982.4 704.4Z" fill="#28a5ea"/><path d="M978.4 702.4L1532.0 367.4L1540.5 369.6L989.1 707.7Z" fill="#26adea"/><path d="M985.1 705.7L1537.3 368.8L1545.9 370.9L995.8 710.9Z" fill="#25b2e9"/><path d="M991.8 709.0L1542.7 370.1L1551.2 372.3L1002.5 714.2Z" fill="#24b8e8"/><path d="M998.5 712.2L1548.0 371.5L1556.5 373.7L1009.2 717.5Z" fill="#22bce8"/><path d="M1005.2 715.5L1553.3 372.9L1561.9 375.1L1015.9 720.8Z" fill="#21c2e7"/><path d="M1011.9 718.8L1558.7 374.2L1567.2 376.4L1022.6 724.0Z" fill="#20c6e6"/><path d="M1018.6 722.1L1564.0 375.6L1572.5 377.8L1029.4 727.3Z" fill="#20c8e5"/><path d="M1025.3 725.3L1569.3 377.0L1577.9 379.2L1036.1 730.6Z" fill="#1fcae5"/><path d="M1032.0 728.6L1574.7 378.4L1583.2 380.6L1042.8 733.8Z" fill="#1fcce4"/><path d="M1038.8 731.9L1580.0 379.8L1588.5 381.9L1049.5 737.1Z" fill="#1fcde4"/><path d="M1045.5 735.1L1585.3 381.1L1593.9 383.3L1056.2 740.4Z" fill="#1fcfe3"/><path d="M1052.2 738.4L1590.7 382.5L1599.2 384.7L1062.9 743.6Z" fill="#1ed1e3"/><path d="M1058.9 741.7L1596.0 383.9L1604.5 386.1L1069.6 746.9Z" fill="#1ed3e2"/><path d="M1065.6 745.0L1601.3 385.2L1609.9 387.4L1076.3 750.2Z" fill="#1ed3e1"/><path d="M1072.3 748.2L1606.7 386.6L1615.2 388.8L1083.0 753.5Z" fill="#1ed4e0"/><path d="M1079.0 751.5L1612.0 388.0L1620.5 390.2L1089.7 756.7Z" fill="#1ed4e0"/><path d="M1085.7 754.8L1617.3 389.4L1625.9 391.6L1096.4 760.0Z" fill="#1fd4df"/><path d="M1092.4 758.0L1622.7 390.8L1631.2 392.9L1103.2 763.3Z" fill="#1fd5de"/><path d="M1099.1 761.3L1628.0 392.1L1636.5 394.3L1109.9 766.5Z" fill="#1fd5dd"/><path d="M1105.8 764.6L1633.3 393.5L1641.9 395.7L1116.6 769.8Z" fill="#1fd5dc"/><path d="M1112.5 767.9L1638.7 394.9L1647.2 397.1L1123.3 773.1Z" fill="#1fd6db"/><path d="M1119.2 771.1L1644.0 396.2L1652.5 398.4L1130.0 776.4Z" fill="#1fd6db"/><path d="M1126.0 774.4L1649.3 397.6L1657.9 399.8L1136.7 779.6Z" fill="#1fd6da"/><path d="M1132.7 777.7L1654.7 399.0L1663.2 401.2L1143.4 782.9Z" fill="#20d7d9"/><path d="M1139.4 780.9L1660.0 400.4L1668.5 402.6L1150.1 786.2Z" fill="#20d7d8"/><path d="M1146.1 784.2L1665.3 401.8L1673.9 403.9L1156.8 789.4Z" fill="#20d7d7"/><path d="M1152.8 787.5L1670.7 403.1L1679.2 405.3L1163.5 792.7Z" fill="#20d8d6"/><path d="M1159.5 790.8L1676.0 404.5L1684.5 406.7L1170.2 796.0Z" fill="#20d8d5"/><path d="M1166.2 794.0L1681.3 405.9L1689.9 408.1L1176.9 799.3Z" fill="#20d8d4"/><path d="M1172.9 797.3L1686.7 407.2L1695.2 409.4L1183.7 802.5Z" fill="#20d9d3"/><path d="M1179.6 800.6L1692.0 408.6L1700.5 410.8L1190.4 805.8Z" fill="#21d9d2"/><path d="M1186.3 803.8L1697.3 410.0L1705.9 412.2L1197.1 809.1Z" fill="#21dad1"/><path d="M1193.0 807.1L1702.7 411.4L1711.2 413.6L1203.8 812.3Z" fill="#21dad0"/><path d="M1199.8 810.4L1708.0 412.8L1716.5 414.9L1210.5 815.6Z" fill="#21dace"/><path d="M1206.5 813.6L1713.3 414.1L1721.9 416.3L1217.2 818.9Z" fill="#21dacd"/><path d="M1213.2 816.9L1718.7 415.5L1727.2 417.7L1223.9 822.1Z" fill="#21dbcc"/><path d="M1219.9 820.2L1724.0 416.9L1732.5 419.1L1230.6 825.4Z" fill="#22dbcb"/><path d="M1226.6 823.5L1729.3 418.2L1737.9 420.4L1237.3 828.7Z" fill="#22dcca"/><path d="M1233.3 826.7L1734.7 419.6L1740.0 421.0L1240.0 830.0Z" fill="#22dcc9"/></g><defs><filter id="bl2" x="-20%" y="-20%" width="140%" height="140%"><feGaussianBlur stdDeviation="2.5"/></filter><filter id="bl1"><feGaussianBlur stdDeviation="0.8"/></filter><linearGradient id="magv" x1="0" y1="0" x2="0" y2="1"><stop offset="0" stop-color="#f04cb0"/><stop offset="0.35" stop-color="#ec4ed8"/><stop offset="0.8" stop-color="#e04ef0"/><stop offset="1" stop-color="#9a50f0"/></linearGradient><linearGradient id="grn" x1="0" y1="0" x2="1" y2="1"><stop offset="0" stop-color="#56d030"/><stop offset="0.5" stop-color="#7ad832"/><stop offset="1" stop-color="#4ccc36"/></linearGradient></defs><ellipse cx="1183" cy="681" rx="100" ry="48" fill="#2ad6b8" filter="url(#bl2)" opacity="0.9"/><ellipse cx="1183" cy="681" rx="96" ry="45" fill="#30d890"/><ellipse cx="1185" cy="686" rx="78" ry="31.5" fill="#060606"/><ellipse cx="1183" cy="661" rx="80" ry="43" fill="url(#magv)"/><ellipse cx="1182" cy="655" rx="48" ry="26.5" fill="#f24e86"/><ellipse cx="1182" cy="653.5" rx="3.5" ry="2.5" fill="#111"/><path d="M1143 672Q1150 677 1161 679" stroke="#222" stroke-width="1.6" fill="none"/><ellipse cx="1546" cy="434" rx="71" ry="23" fill="#2ad6b8" filter="url(#bl2)" opacity="0.9"/><ellipse cx="1546" cy="434" rx="68" ry="21.5" fill="#30d890"/><path d="M1494 436Q1510 452 1549 452L1552 445Q1515 440 1494 436Z" fill="#060606"/><ellipse cx="1545.7" cy="421.6" rx="58" ry="24.4" fill="url(#magv)"/><ellipse cx="1551" cy="415" rx="39" ry="14.5" fill="#f24e86" filter="url(#bl1)"/><ellipse cx="1547.5" cy="413" rx="26.5" ry="11" fill="none" stroke="#8a8aa0" stroke-width="1.2"/><circle cx="1548.8" cy="415" r="3.2" fill="#ffe820"/><clipPath id="tdisc"><ellipse cx="1545.7" cy="421.6" rx="58" ry="24.4"/></clipPath><text x="1574" y="421" font-size="12" fill="#7aa4ec" font-family="Liberation Sans" clip-path="url(#tdisc)">特征区域</text><rect x="-1" y="-1" width="2" height="2" rx="0.32" ry="1" transform="matrix(73 7 -3 23 1394 528)" fill="#3a76ea"/><rect x="-1" y="-1" width="2" height="2" rx="0.28" ry="1" transform="matrix(63 6 -3 16.5 1394 531)" fill="url(#grn)"/><path d="M1332 520Q1336 508 1354 508L1436 520Q1453 524 1457 534Q1446 527 1430 525L1358 515Q1342 515 1332 520Z" fill="#060606"/><ellipse cx="1381" cy="498.5" rx="8" ry="2.5" fill="#d050f0" opacity="0.85"/><ellipse cx="1441" cy="515" rx="7" ry="3" transform="rotate(25 1441 515)" fill="#c050f0" opacity="0.8"/><ellipse cx="1332" cy="570" rx="19" ry="9.5" fill="#30d87a"/><path d="M1320 562Q1335 556 1351 566L1350 569Q1335 562 1322 565Z" fill="#060606"/><ellipse cx="1331" cy="573" rx="5.5" ry="3.5" fill="#060606"/><path d="M1405.5 467.5L1457 435L1549 455L1498 489Z M1405.5 467.5V480.5 M1457 435V447.5 M1498 489V506 M1549 455V470" stroke="#3ee0ff" stroke-width="1.1" fill="none" opacity="0.95"/><circle cx="1477" cy="476.6" r="2.6" fill="#ffe840"/></g><text x="1495" y="359" font-size="14.5" fill="#e8e8e8" font-family="Liberation Sans">4.18</text><text x="1550" y="370" font-size="14.5" fill="#e8e8e8" font-family="Liberation Sans">21.34</text><text x="1607" y="380" font-size="14.5" fill="#e8e8e8" font-family="Liberation Sans">38.50</text><text x="1667" y="391" font-size="14.5" fill="#e8e8e8" font-family="Liberation Sans">55.66</text><text x="1730" y="402" font-size="14.5" fill="#e8e8e8" font-family="Liberation Sans">72.83</text><text x="1796" y="414" font-size="14.5" fill="#e8e8e8" font-family="Liberation Sans">89.99</text><text x="1806" y="440" font-size="14.5" fill="#e8e8e8" font-family="Liberation Sans">191.08</text><text x="1737" y="504" font-size="14.5" fill="#e8e8e8" font-family="Liberation Sans">149.39</text><text x="1653" y="582" font-size="14.5" fill="#e8e8e8" font-family="Liberation Sans">107.70</text><text x="1547" y="680" font-size="14.5" fill="#e8e8e8" font-family="Liberation Sans">66.01</text><text x="1412" y="806" font-size="14.5" fill="#e8e8e8" font-family="Liberation Sans">24.32</text><text x="1478" y="351" font-size="17" fill="#2ec83a" font-family="Liberation Sans">Y(mm)</text><line x1="1856.6" y1="216.7" x2="1855.5" y2="190" stroke="#3a7af0" stroke-width="2"/><line x1="1856.6" y1="216.7" x2="1872" y2="207" stroke="#8ac030" stroke-width="2"/><line x1="1856.6" y1="216.7" x2="1880" y2="222" stroke="#e84850" stroke-width="2"/><circle cx="1826.4" cy="208.6" r="9" fill="#a83038" stroke="#f05058" stroke-width="1.8"/><circle cx="1835.3" cy="231" r="9" fill="#4a7a18" stroke="#8ac030" stroke-width="1.8"/><circle cx="1859.2" cy="251" r="9" fill="#1f4fb0" stroke="#3a80f0" stroke-width="1.8"/><circle cx="1855.5" cy="182.4" r="9" fill="#1f4fb0" stroke="#3a80f0" stroke-width="1.8"/><text x="1855.5" y="186.9" font-size="12" font-weight="bold" fill="#fff" text-anchor="middle" font-family="Liberation Sans">Z</text><circle cx="1879.5" cy="202" r="9" fill="#4a7a18" stroke="#8ac030" stroke-width="1.8"/><text x="1879.5" y="206.5" font-size="12" font-weight="bold" fill="#fff" text-anchor="middle" font-family="Liberation Sans">Y</text><circle cx="1888.7" cy="224.8" r="9" fill="#a83038" stroke="#f05058" stroke-width="1.8"/><text x="1888.7" y="229.3" font-size="12" font-weight="bold" fill="#fff" text-anchor="middle" font-family="Liberation Sans">X</text><path d="M1893 298Q1890 294 1891 292Q1893 291 1895 294V285Q1895 283 1896.5 283Q1898 283 1898 285V290V283.5Q1898 282 1899.5 282Q1901 282 1901 283.5V290V284.5Q1901 283 1902.5 283Q1904 283 1904 284.5V291V287Q1904 285.5 1905.2 285.5Q1906.5 285.5 1906.5 287V295Q1906.5 301 1900 302Q1896 302 1893 298Z" stroke="#eee" stroke-width="1.2" fill="none"/><circle cx="1896" cy="326" r="6.5" stroke="#eee" stroke-width="1.6" fill="none"/><path d="M1896 322.5V329.5M1892.5 326H1899.5M1901 331L1906 336" stroke="#eee" stroke-width="1.6"/><line x1="1883" y1="349" x2="1914" y2="349" stroke="#bbb" stroke-width="1.5"/><circle cx="1898.8" cy="860" r="15" fill="#222" stroke="#8a8a8a" stroke-width="1.8"/><text x="1898.8" y="866" font-size="17" font-weight="bold" fill="#f2e08a" text-anchor="middle" font-family="Liberation Sans">?</text></svg>
<div class="a" style="left:862px;top:886px;width:1058px;height:2px;background:#0c0c0c"></div><div class="a" style="left:862px;top:888px;width:4px;height:143px;background:#161616"></div>
<div class="a" style="left:866px;top:888px;width:1054px;height:21px;background:#1d1d1d"></div>
<div class="t" style="left:871px;top:892px;font-size:12px;color:#e6e6e6">结果输出</div>
<svg class="a" style="left:1906px;top:894px" width="10" height="7"><path d="M1 1L5 5L9 1" stroke="#aaa" stroke-width="1.2" fill="none"/></svg>
<div class="a" style="left:866px;top:910px;width:1054px;height:29px;background:#272727"></div>
<div class="t" style="left:927px;top:917px;font-size:12px;color:#e6e6e6;transform:scaleX(1);transform-origin:0 0">特征区域</div>
<div class="a" style="left:981px;top:915px;width:1px;height:17px;background:#555"></div>
<svg class="a" style="left:986px;top:917px" width="13" height="14"><circle cx="3" cy="2.5" r="2" fill="#ddd"/><circle cx="10" cy="2.5" r="2" fill="#ddd"/><circle cx="3" cy="10.5" r="2.2" stroke="#ddd" fill="none" stroke-width="1.2"/><circle cx="10" cy="10.5" r="2.2" stroke="#ddd" fill="none" stroke-width="1.2"/><line x1="3" y1="5" x2="3" y2="8" stroke="#ddd"/></svg>
<svg class="a" style="left:1899px;top:919px" width="14" height="10"><path d="M1 5Q7 -1 13 5Q7 11 1 5Z" stroke="#ddd" stroke-width="1.2" fill="none"/><circle cx="7" cy="5" r="2.2" fill="#ddd"/></svg>
<div class="a" style="left:866px;top:909px;width:1054px;height:1px;background:#1a1a1a"></div>
<div class="a" style="left:866px;top:940px;width:1054px;height:29px;background:#272727"></div>
<div class="t" style="left:927px;top:947px;font-size:13px;color:#e6e6e6;transform:scaleX(0.879);transform-origin:0 0">Measure Dimensions by Surface Features_1</div>
<div class="a" style="left:1156px;top:945px;width:1px;height:17px;background:#555"></div>
<svg class="a" style="left:1162px;top:948px" width="12" height="12"><rect x="0.5" y="0.5" width="11" height="11" stroke="#ddd" fill="none"/><path d="M0 8L8 0M0 12L12 0M4 12L12 4M8 12L12 8" stroke="#ddd" stroke-width="0.9"/></svg>
<div class="t" style="left:1176px;top:947px;font-size:13px;color:#e6e6e6;transform:scaleX(0.9);transform-origin:0 0">深度图(输入)</div>
<svg class="a" style="left:1899px;top:949px" width="14" height="10"><path d="M1 5Q7 -1 13 5Q7 11 1 5Z" stroke="#ddd" stroke-width="1.2" fill="none"/><circle cx="7" cy="5" r="2.2" fill="#ddd"/></svg>
<div class="a" style="left:866px;top:939px;width:1054px;height:1px;background:#1a1a1a"></div>
<div class="a" style="left:866px;top:970px;width:1054px;height:29px;background:#272727"></div>
<div class="t" style="left:927px;top:977px;font-size:13px;color:#e6e6e6;transform:scaleX(0.879);transform-origin:0 0">Measure Dimensions by Surface Features_1</div>
<div class="a" style="left:1156px;top:975px;width:1px;height:17px;background:#555"></div>
<svg class="a" style="left:1161px;top:977px" width="13" height="14"><circle cx="3" cy="2.5" r="2" fill="#ddd"/><circle cx="10" cy="2.5" r="2" fill="#ddd"/><circle cx="3" cy="10.5" r="2.2" stroke="#ddd" fill="none" stroke-width="1.2"/><circle cx="10" cy="10.5" r="2.2" stroke="#ddd" fill="none" stroke-width="1.2"/><line x1="3" y1="5" x2="3" y2="8" stroke="#ddd"/></svg>
<div class="t" style="left:1176px;top:977px;font-size:13px;color:#e6e6e6;transform:scaleX(0.9);transform-origin:0 0">Feature Points(输出)</div>
<svg class="a" style="left:1899px;top:979px" width="14" height="10"><path d="M1 5Q7 -1 13 5Q7 11 1 5Z" stroke="#ddd" stroke-width="1.2" fill="none"/><circle cx="7" cy="5" r="2.2" fill="#ddd"/></svg>
<div class="a" style="left:866px;top:969px;width:1054px;height:1px;background:#1a1a1a"></div>
<div class="a" style="left:866px;top:1000px;width:1054px;height:29px;background:#272727"></div>
<div class="t" style="left:927px;top:1007px;font-size:13px;color:#e6e6e6;transform:scaleX(0.879);transform-origin:0 0">Measure Dimensions by Surface Features_1</div>
<div class="a" style="left:1156px;top:1005px;width:1px;height:17px;background:#555"></div>
<svg class="a" style="left:1162px;top:1008px" width="12" height="12"><rect x="0.75" y="1.75" width="11" height="5" stroke="#ddd" stroke-width="1.3" fill="none"/><path d="M3 2V4M6 2V4.5M9 2V4" stroke="#ddd" stroke-width="0.9"/><line x1="0" y1="10.5" x2="12" y2="10.5" stroke="#ddd" stroke-width="1.6"/></svg>
<div class="t" style="left:1176px;top:1007px;font-size:13px;color:#e6e6e6;transform:scaleX(0.9);transform-origin:0 0">高度(输出)</div>
<svg class="a" style="left:1899px;top:1009px" width="14" height="10"><path d="M1 5Q7 -1 13 5Q7 11 1 5Z" stroke="#ddd" stroke-width="1.2" fill="none"/><circle cx="7" cy="5" r="2.2" fill="#ddd"/></svg>
<div class="a" style="left:866px;top:999px;width:1054px;height:1px;background:#1a1a1a"></div>
<div class="a" style="left:879px;top:1006px;width:33px;height:16px;background:#3cbf86;border-radius:2px;font-size:12px;color:#f4fff8;text-align:center;line-height:16px">OK</div>
<div class="t" style="left:1786px;top:1008px;font-size:12px;color:#3cae84">-3.101 mm</div>
<svg class="a" style="left:1861px;top:1006px" width="12" height="16"><path d="M3 1H9M4 1V7L2 10H10L8 7V1M6 10V15" stroke="#999" stroke-width="1.2" fill="none"/></svg>
<div class="a" style="left:1892px;top:1007px;width:1px;height:14px;background:#444"></div>
<div class="a" style="left:24px;top:1031px;width:1896px;height:20px;background:#1e1e1e"></div>
<div class="t" style="left:30px;top:1037px;font-size:12px;color:#e6e6e6">日志</div>
<svg class="a" style="left:1906px;top:1039px" width="10" height="7"><path d="M1 6L5 2L9 6" stroke="#aaa" stroke-width="1.2" fill="none"/></svg>
<div class="t" style="left:1177px;top:980px;font-size:34px;color:rgba(215,215,215,0.74);transform:scaleX(1.005);transform-origin:0 0">Copyright © Mech-Mind. All Rights Reserved.</div>
</body></html>
